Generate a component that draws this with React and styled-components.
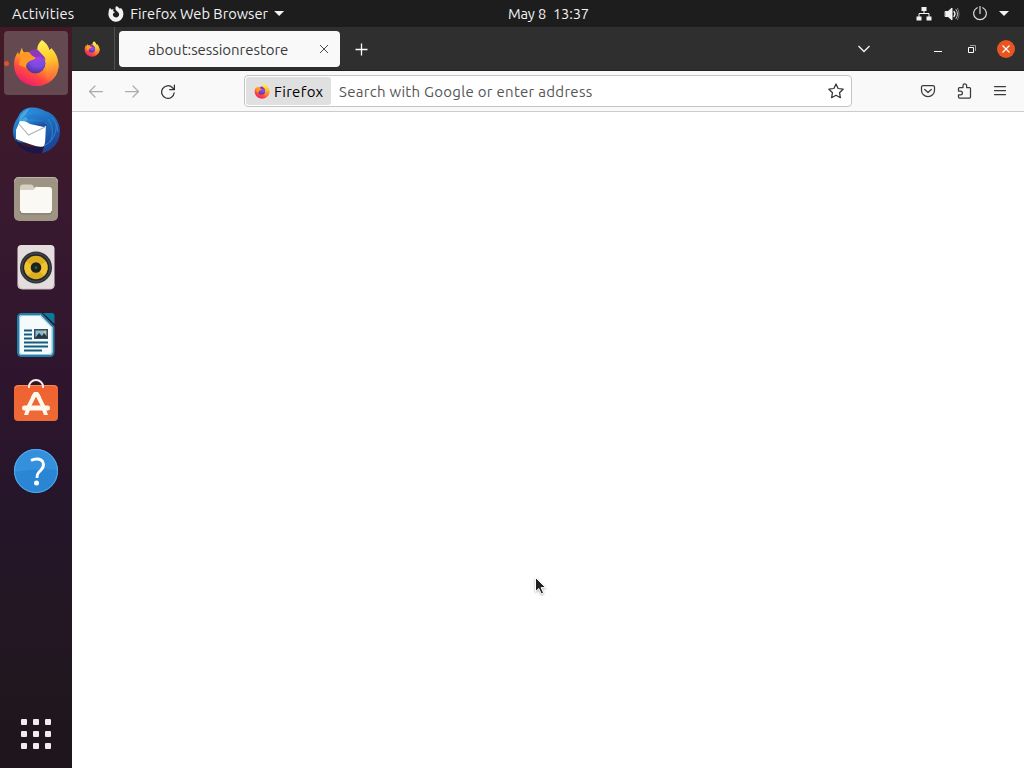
import { useId } from "react";
import styled, { createGlobalStyle } from "styled-components";

const dockApps = [
    { name: "Firefox", Icon: FirefoxIcon, active: true },
    { name: "Thunderbird", Icon: MailIcon },
    { name: "Files", Icon: FilesIcon },
    { name: "Rhythmbox", Icon: MusicIcon },
    { name: "Writer", Icon: WriterIcon },
    { name: "Software", Icon: SoftwareIcon },
    { name: "Help", Icon: HelpIcon },
];

function App() {
    return (
        <Desktop>
            <GlobalStyle />
            <TopBar />
            <Workspace>
                <Dock />
                <BrowserWindow />
            </Workspace>
        </Desktop>
    );
}

export default App;

function TopBar() {
    return (
        <TopBarWrapper>
            <TopLeft>
                <TopText $spacing="0.22px">Activities</TopText>
                <AppMenu>
                    <FirefoxMono />
                    <TopText>Firefox Web Browser</TopText>
                    <Caret />
                </AppMenu>
            </TopLeft>
            <Clock>
                <TopText $spacing="-0.2px">May 8</TopText>
                <TopText $spacing="-0.15px">13:37</TopText>
            </Clock>
            <Tray>
                <svg width="16" height="16" viewBox="0 0 16 16" fill="#f2f2f2">
                    <path d="M5.500 1h5v4h-5zM.5 10.500h5v4h-5zM10.500 10.500h5v4h-5z" />
                    <path d="M8 5v3M3 11V7.500h10V11" fill="none" stroke="#f2f2f2" />
                </svg>
                <svg width="16" height="16" viewBox="0 0 16 16" fill="none" stroke="#f2f2f2" strokeLinecap="round">
                    <path d="M1.500 5.500H4L8 2v12L4 10.500H1.500z" fill="#f2f2f2" />
                    <path d="M10 5.500q2 2.500 0 5" strokeWidth="1.300" />
                    <path d="M12 3.500q3.200 4.500 0 9" stroke="#c8c8c8" />
                    <path d="M13.500 2.200q3.200 5.800 0 11.600" stroke="#777" />
                </svg>
                <svg width="16" height="16" viewBox="0 0 16 16" fill="none" stroke="#dedede" strokeWidth="1.200" strokeLinecap="round">
                    <path d="M5.200 1.700a6.300 6.300 0 1 0 5.600 0M8 .5V7.500" />
                </svg>
                <Caret />
            </Tray>
        </TopBarWrapper>
    );
}

function Dock() {
    return (
        <DockWrapper>
            {dockApps.map(({ name, Icon, active }) => (
                <DockItem key={name} title={name} $active={active}>
                    {active && <RunningDot />}
                    <Icon size={48} />
                </DockItem>
            ))}
            <AppGrid>
                {Array.from({ length: 9 }, (_, i) => <GridDot key={i} />)}
            </AppGrid>
        </DockWrapper>
    );
}

function BrowserWindow() {
    return (
        <Browser>
            <TabStrip>
                <PinnedTab><FirefoxIcon size={16} /></PinnedTab>
                <Tab>
                    <TabTitle>about:sessionrestore</TabTitle>
                    <svg width="10" height="10" viewBox="0 0 10 10" stroke="#4a4a4a" strokeWidth="1">
                        <path d="M1 1l8 8M9 1L1 9" />
                    </svg>
                </Tab>
                <NewTab>
                    <svg width="14" height="14" viewBox="0 0 14 14" stroke="#fff" strokeWidth="1.3">
                        <path d="M6.500 1.500v12M.5 7.500h12" />
                    </svg>
                </NewTab>
                <WindowControls>
                    <AllTabs width="14" height="14" viewBox="0 0 14 14" fill="none" stroke="#f4f4f4" strokeWidth="1.3">
                        <path d="M1.500 4L7 9.500 12.500 4" />
                    </AllTabs>
                    <Minimize />
                    <Restore width="10" height="10" viewBox="0 0 10 10" fill="none">
                        <path d="M3 1.500h5.500V7" stroke="#9b9b9b" />
                        <path d="M1.500 3.500h5v5h-5z" stroke="#fff" />
                    </Restore>
                    <CloseWindow>
                        <svg width="10" height="10" viewBox="0 0 10 10" stroke="#fff" strokeWidth="1.2">
                            <path d="M1.500 1.500l7 7M8.500 1.500l-7 7" />
                        </svg>
                    </CloseWindow>
                </WindowControls>
            </TabStrip>
            <Toolbar>
                <NavButtons>
                    <ToolIcon $color="#acacac" viewBox="0 0 16 16">
                        <path d="M14.500 8.500H1.500M7 3L1.500 8.500 7 14" />
                    </ToolIcon>
                    <ToolIcon $color="#acacac" viewBox="0 0 16 16">
                        <path d="M1.500 8.500h13M9 3l5.500 5.500L9 14" />
                    </ToolIcon>
                    <ToolIcon $color="#333" viewBox="0 0 16 16">
                        <path d="M14.200 9.800A6.300 6.300 0 1 1 12.500 4.700L14 6.200M14.400 2v4.700H9.700" />
                    </ToolIcon>
                </NavButtons>
                <UrlBar>
                    <Identity>
                        <FirefoxIcon size={16} />
                        <IdentityText>Firefox</IdentityText>
                    </Identity>
                    <Placeholder>Search with Google or enter address</Placeholder>
                    <ToolIcon $color="#333" viewBox="0 0 16 16">
                        <path d="M8 1l2.100 4.500 5 .7-3.600 3.500.9 5L8 12.300l-4.400 2.400.9-5L.9 6.200l5-.7z" />
                    </ToolIcon>
                </UrlBar>
                <ToolActions>
                    <ToolIcon $color="#3b3b3b" viewBox="0 0 16 16">
                        <path d="M3 2.500h10a1.500 1.500 0 0 1 1.500 1.500v3.500a6.500 6 0 0 1-13 0V4A1.500 1.500 0 0 1 3 2.500zM4.700 6.500L8 9.500l3.300-3" />
                    </ToolIcon>
                    <ToolIcon $color="#3b3b3b" viewBox="0 0 16 16">
                        <path d="M2.500 8V5.500Q2.500 4.500 3.500 4.500H7V2.700a1.800 1.800 0 0 1 3.600 0v1.800H13.500Q14.500 4.500 14.500 5.500V14Q14.500 15 13.500 15H3.500Q2.500 15 2.500 14v-2.200h2a1.900 1.900 0 0 0 0-3.800z" />
                    </ToolIcon>
                    <ToolIcon $color="#3b3b3b" viewBox="0 0 16 16">
                        <path d="M2.500 3.500h11M2.500 7.500h11M2.500 11.500h11" />
                    </ToolIcon>
                </ToolActions>
            </Toolbar>
            <Page>
                <Pointer width="14" height="20" viewBox="0 0 14 20">
                    <path d="M1.500 1.500v14l3.300-3 2.500 5.500 2.300-1-2.500-5.400h4.600z" fill="#222" stroke="#fff" />
                </Pointer>
            </Page>
        </Browser>
    );
}

function FirefoxMono() {
    return (
        <svg width="16" height="16" viewBox="0 0 16 16" fill="#f2f2f2">
            <path d="M8 .2c1.800.2 2.800 1.300 4 2.600.6-.2.700-1 .7-1 1.800 1.500 2.700 3.700 2.700 6.200A7.500 7.500 0 1 1 .6 6.500c0-1.700.5-3.500 1.500-4.700l1 1.700 2.400-.2-.4 1.900 1.700.9c-.1 1-1.300 1-1.800 1.600-.6 2 .8 3.700 2.900 3.700 2 0 3.300-1.500 3.200-3.200C11 6.300 9.200 6 8 4.300 7.200 3.200 7.300 1.500 8 .2z" />
        </svg>
    );
}

function FirefoxIcon({ size }) {
    const id = useId();
    return (
        <svg width={size} height={size} viewBox="0 0 48 48">
            <defs>
                <linearGradient id={`${id}body`} x1=".8" y1=".1" x2=".25" y2="1">
                    <stop offset=".1" stopColor="#ffe446" />
                    <stop offset=".4" stopColor="#ff9d26" />
                    <stop offset=".67" stopColor="#ff493f" />
                    <stop offset="1" stopColor="#ed1676" />
                </linearGradient>
                <linearGradient id={`${id}flame`} x1=".4" y1="0" x2=".5" y2="1">
                    <stop offset="0" stopColor="#fff456" />
                    <stop offset=".5" stopColor="#ffc52b" />
                    <stop offset="1" stopColor="#ff623b" />
                </linearGradient>
                <radialGradient id={`${id}globe`} cx=".6" cy=".2" r=".8">
                    <stop offset="0" stopColor="#a93ee2" />
                    <stop offset=".55" stopColor="#784ce5" />
                    <stop offset="1" stopColor="#573296" />
                </radialGradient>
            </defs>
            <path d="M10 8.500c.3 3 1.300 4.300 2.300 5.300 1.800-.8 3.700-.8 5.200-.2C20 11 24 10.300 27 11l14 3c3.200 3.500 5.500 8 5.500 13C46 39 36 47 24.500 47 11.500 47 2 37.500 2 25.500c0-5 1.300-9 4-12.500l1 3z" fill={`url(#${id}body)`} />
            <circle cx="23.500" cy="24.500" r="10" fill={`url(#${id}globe)`} />
            <path d="M30 1c4 2.700 6.500 6 7.500 10 1.500-1 1.700-2 1.700-2 4.300 4.300 7.300 10 7.300 17 0 8-5.500 14-12.500 15 .5-2 .5-5-.2-6.500 3-5 2.700-11-.8-15-3.300-3-6.500-3.800-7.500-8C24.800 7.500 27 3.500 30 1z" fill={`url(#${id}flame)`} />
            <path d="M9.500 14.500c3-2 6.500-2 8.500-.3 1.500 2 3.300 3.500 5.500 4.300.2 1.500-2.500 2.500-5 3.200-3.500 1-4.500 4.500-4.500 7L7 26z" fill="#ff9825" />
            <path d="M17 13c3-2.500 6-3 9-2l4.500 5c2 1.700 3 3.300 3 5.500-2.500-3.300-6-4.500-10-3.200-2-.8-4.500-2.300-6.500-5.300z" fill="#8b38bb" />
        </svg>
    );
}

function MailIcon() {
    return (
        <svg width="48" height="48" viewBox="0 0 48 48">
            <defs>
                <linearGradient id="birdBlue" x1=".2" y1="0" x2=".8" y2="1">
                    <stop offset="0" stopColor="#2f8ede" />
                    <stop offset=".5" stopColor="#1d68b8" />
                    <stop offset="1" stopColor="#203c93" />
                </linearGradient>
            </defs>
            <path d="M17 .8C24-.4 30 2 33 4c9 2 15 11 15 20 0 12-8 20-18 22l3-8-28-3C-1 29 0 18 6 10 8 5 12 2 17 .8z" fill="url(#birdBlue)" />
            <path d="M4 31l1 3c7 8 18 7 27 4l-3 8C16 48 6 41 4 33z" fill="#1b164a" />
            <path d="M7 14c0-5 5-11 11-13C12 8 13 12 20 15L8 20z" fill="#55bce5" opacity=".65" />
            <path d="M8 14l26 2-1 22C30 43 15 36 4 32L4 23z" fill="#fff" />
            <path d="M7 17l9.500 11L33 20" fill="none" stroke="#aeb3b9" strokeWidth="1.100" />
            <path d="M8 15c4-7 13-8 21-7 7 1 9 8 7 14 0 9-5 15-4 22 8-3 15-11 14-21C46 13 40 6 31 4 22 1 12 6 8 15z" fill="url(#birdBlue)" />
            <path d="M13 14c6-3 14-1 19 0l3 4-3 2-14-3z" fill="url(#birdBlue)" />
            <path d="M36 12c5 7 6 15 2 23M32 39c9-5 13-13 12-22M40 10q6 7 6 15" fill="none" stroke="#2f8fda" strokeWidth=".8" />
        </svg>
    );
}

function FilesIcon() {
    return (
        <svg width="48" height="48" viewBox="0 0 48 48">
            <rect x="2" y="2" width="44" height="44" rx="5" fill="#9d9484" />
            <path d="M2.500 7Q2.500 2.500 6.500 2.500h35q4 0 4 4.500" fill="none" stroke="#bcb4a7" />
            <path d="M8 14V12.500q0-3 3-3h8q2 0 3 3l15 1v5H8z" fill="#d5cfc4" />
            <path d="M8 35V15h13q1 0 2-2t3-1h11q3 0 3 3v20q0 3-3 3H11q-3 0-3-3z" fill="#faf9f3" />
            <path d="M8 36q0 3 3 3h26q3 0 3-3" fill="none" stroke="#81786c" />
        </svg>
    );
}

function MusicIcon() {
    return (
        <svg width="48" height="48" viewBox="0 0 48 48">
            <rect x="5.500" y="2" width="37" height="44" rx="4" fill="#e5dddd" />
            <path d="M6 41q1 5 4 5h28q4 0 4-5" fill="none" stroke="#c9bec1" />
            <circle cx="24" cy="24.500" r="16" fill="#343538" />
            <circle cx="24" cy="24.500" r="14" fill="#20262c" stroke="#50565a" strokeWidth=".8" />
            <circle cx="24" cy="24.500" r="11.700" fill="#dcae20" />
            <path d="M24 24.500L14 18.500a11.700 11.700 0 0 0 2 14.500zM24 24.500l10-6a11.700 11.700 0 0 1-2 14.500z" fill="#efc331" />
            <circle cx="24" cy="24.500" r="5.300" fill="#1b211d" />
            <circle cx="24" cy="24.500" r="1.500" fill="#3a5042" />
        </svg>
    );
}

function WriterIcon() {
    return (
        <svg width="48" height="48" viewBox="0 0 48 48">
            <path d="M10 3h19l12.500 13v25q0 4-4 4H10q-4 0-4-4V7q0-4 4-4z" fill="#f5fafc" stroke="#247fa7" strokeWidth="2" />
            <path d="M10 4.500h18l12 12V41q0 2.500-3 2.500H10Q7.500 43.500 7.500 41V7q0-2.500 2.500-2.500z" fill="none" stroke="#92c4dc" strokeWidth="1" />
            <path d="M31 2h9q2.500 0 2.500 2.500V13z" fill="#087c99" />
            <path d="M12 19.500h8M12 23.500h8M12 27.500h8M12 31.500h24M12 35.500h24M12 39.500h18" stroke="#155b7d" strokeWidth="2" />
            <path d="M22 18h14v10H22z" fill="#33505e" />
            <path d="M23.500 19.500h11V26h-11z" fill="#8bb9d0" />
            <path d="M23 27l4-5 3 3 2-3 4 5z" fill="#293740" />
            <circle cx="33" cy="21" r="1.200" fill="#f3c94e" />
        </svg>
    );
}

function SoftwareIcon() {
    return (
        <svg width="48" height="48" viewBox="0 0 48 48">
            <defs>
                <linearGradient id="bag" x2="0" y2="1">
                    <stop stopColor="#f0622f" />
                    <stop offset="1" stopColor="#ed6b38" />
                </linearGradient>
            </defs>
            <rect x="2" y="6" width="44" height="36" rx="4" fill="url(#bag)" />
            <path d="M3 9q1-2.500 4-2.500h34q3 0 4 2.500" fill="none" stroke="#f18b5b" />
            <path d="M17 9V7.500a7 6.500 0 0 1 14 0V9" fill="none" stroke="#f6eee5" strokeWidth="2" />
            <path d="M23 15L16 29M25 15l7 14" fill="none" stroke="#fff8ec" strokeWidth="4" />
            <path d="M22 13h4l3 5H19z" fill="#fff8ec" />
            <rect x="10" y="26.500" width="28" height="5" rx="2.500" fill="#fff8ec" />
            <path d="M14 30l4 1-2 5h-4zM30 31l4-1 2 6h-4z" fill="#fff8ec" />
        </svg>
    );
}

function HelpIcon() {
    return (
        <svg width="48" height="48" viewBox="0 0 48 48">
            <circle cx="24" cy="24" r="22" fill="#2a86d4" />
            <path d="M2 25a22 22 0 0 1 44-2q-20-2-44 2z" fill="#3490dc" />
            <circle cx="24" cy="24" r="21.500" fill="none" stroke="#54acec" />
            <path d="M19 13.500q3-1.500 5.500-1.500c8 0 8.500 7 4.500 11-3 3-4 4-4 8" fill="none" stroke="#fff" strokeWidth="2.800" />
            <circle cx="24.500" cy="36" r="2.500" fill="#fff" />
        </svg>
    );
}

const GlobalStyle = createGlobalStyle`
  * {
    box-sizing: border-box;
  }

  body {
    margin: 0;
    overflow: hidden;
    font-family: Ubuntu, "Noto Sans", sans-serif;
    font-size: 15px;
  }

  svg {
    display: block;
    flex-shrink: 0;
  }
`;

const Desktop = styled.div`
  display: flex;
  flex-direction: column;
  width: 1024px;
  height: 768px;
`;

const TopBarWrapper = styled.header`
  display: grid;
  grid-template-columns: 496px auto 1fr;
  align-items: center;
  height: 27px;
  padding: 0 15px 0 12px;
  color: #f2f2f2;
  background: #1d1d1d;
`;

const TopLeft = styled.div`
  display: flex;
  align-items: center;
  gap: 34px;
`;

const AppMenu = styled.div`
  display: flex;
  align-items: center;
  gap: 6px;
`;

const TopText = styled.span`
  font-size: 14.667px;
  line-height: 27px;
  letter-spacing: ${({ $spacing = "0" }) => $spacing};
  white-space: nowrap;
`;

const Caret = styled.span`
  width: 10px;
  height: 5px;
  background: #f2f2f2;
  clip-path: polygon(0 0, 100% 0, 50% 100%);
`;

const Clock = styled.div`
  display: flex;
  gap: 7px;
`;

const Tray = styled.div`
  display: flex;
  justify-content: flex-end;
  align-items: center;
  gap: 12px;

  ${Caret} {
    margin-left: -1px;
  }
`;

const Workspace = styled.div`
  display: flex;
  flex: 1;
  min-height: 0;
`;

const DockWrapper = styled.nav`
  display: flex;
  flex-direction: column;
  align-items: center;
  gap: 4px;
  width: 72px;
  padding: 4px 4px 19px;
  background: linear-gradient(#431925, #38192f 25%, #2e152d 48%, #25162a 65%, #21171f 88%, #1e161c);
`;

const DockItem = styled.div`
  position: relative;
  display: flex;
  align-items: center;
  justify-content: center;
  width: 64px;
  height: 64px;
  border-radius: 4px;
  background: ${({ $active }) => $active ? "#654950" : "transparent"};
`;

const RunningDot = styled.span`
  position: absolute;
  left: 0;
  width: 5px;
  height: 5px;
  border-radius: 50%;
  background: #d9532c;
`;

const AppGrid = styled.div`
  display: grid;
  grid-template-columns: repeat(3, 6px);
  gap: 6px;
  margin-top: auto;
`;

const GridDot = styled.span`
  height: 6px;
  border-radius: 1px;
  background: #f2eaf1;
`;

const Browser = styled.main`
  display: flex;
  flex: 1;
  flex-direction: column;
  min-width: 0;
`;

const TabStrip = styled.div`
  display: flex;
  align-items: center;
  height: 44px;
  background: #302f30;
  border-bottom: 1px solid #202020;
`;

const PinnedTab = styled.div`
  display: flex;
  align-items: center;
  width: 43px;
  height: 43px;
  padding-left: 12px;
  border-right: 1px solid #505050;
`;

const Tab = styled.div`
  display: flex;
  align-items: center;
  justify-content: space-between;
  width: 221px;
  height: 36px;
  margin-left: 4px;
  padding: 0 11px 0 29px;
  border-radius: 4px;
  background: #f9f9fa;
`;

const TabTitle = styled.span`
  padding-top: 1px;
  color: #3b3b3b;
  letter-spacing: -0.05px;
`;

const NewTab = styled.div`
  margin-left: 15px;
`;

const WindowControls = styled.div`
  display: flex;
  align-items: center;
  margin-left: auto;
  padding-right: 9px;
`;

const AllTabs = styled.svg`
  margin-right: 63px;
`;

const Minimize = styled.span`
  width: 8px;
  height: 1px;
  margin: 5px 25px 0 0;
  background: #fff;
`;

const Restore = styled.svg`
  margin-right: 20px;
`;

const CloseWindow = styled.div`
  display: flex;
  align-items: center;
  justify-content: center;
  width: 18px;
  height: 18px;
  border-radius: 50%;
  background: #e95420;
`;

const Toolbar = styled.div`
  display: flex;
  align-items: center;
  height: 41px;
  padding: 0 16px;
  background: #f9f9fa;
  border-bottom: 1px solid #ccc;
`;

const NavButtons = styled.div`
  display: flex;
  gap: 20px;
`;

const ToolIcon = styled.svg`
  width: 16px;
  height: 16px;
  fill: none;
  stroke: ${({ $color }) => $color};
  stroke-width: 1.25;
  stroke-linejoin: round;
  stroke-linecap: round;
`;

const UrlBar = styled.div`
  display: flex;
  align-items: center;
  width: 608px;
  height: 32px;
  margin-left: 68px;
  padding: 1px 7px 1px 1px;
  border: 1px solid #c5c5c7;
  border-radius: 4px;
  background: #fff;

  > svg {
    margin-left: auto;
  }
`;

const Identity = styled.div`
  display: flex;
  align-items: center;
  gap: 4px;
  width: 85px;
  height: 28px;
  padding-left: 8px;
  border-radius: 3px;
  background: #e0e0e1;
`;

const IdentityText = styled.span`
  padding-top: 1px;
  color: #000;
  letter-spacing: 0.3px;
`;

const Placeholder = styled.span`
  margin-left: 8px;
  padding-top: 1px;
  color: #555;
  letter-spacing: 0.28px;
`;

const ToolActions = styled.div`
  display: flex;
  gap: 20px;
  margin-left: auto;
`;

const Page = styled.section`
  position: relative;
  flex: 1;
  background: #fff;
`;

const Pointer = styled.svg`
  position: absolute;
  left: 462px;
  top: 464px;
  filter: drop-shadow(0 1px 1px rgb(0 0 0 / 0.3));
`;
